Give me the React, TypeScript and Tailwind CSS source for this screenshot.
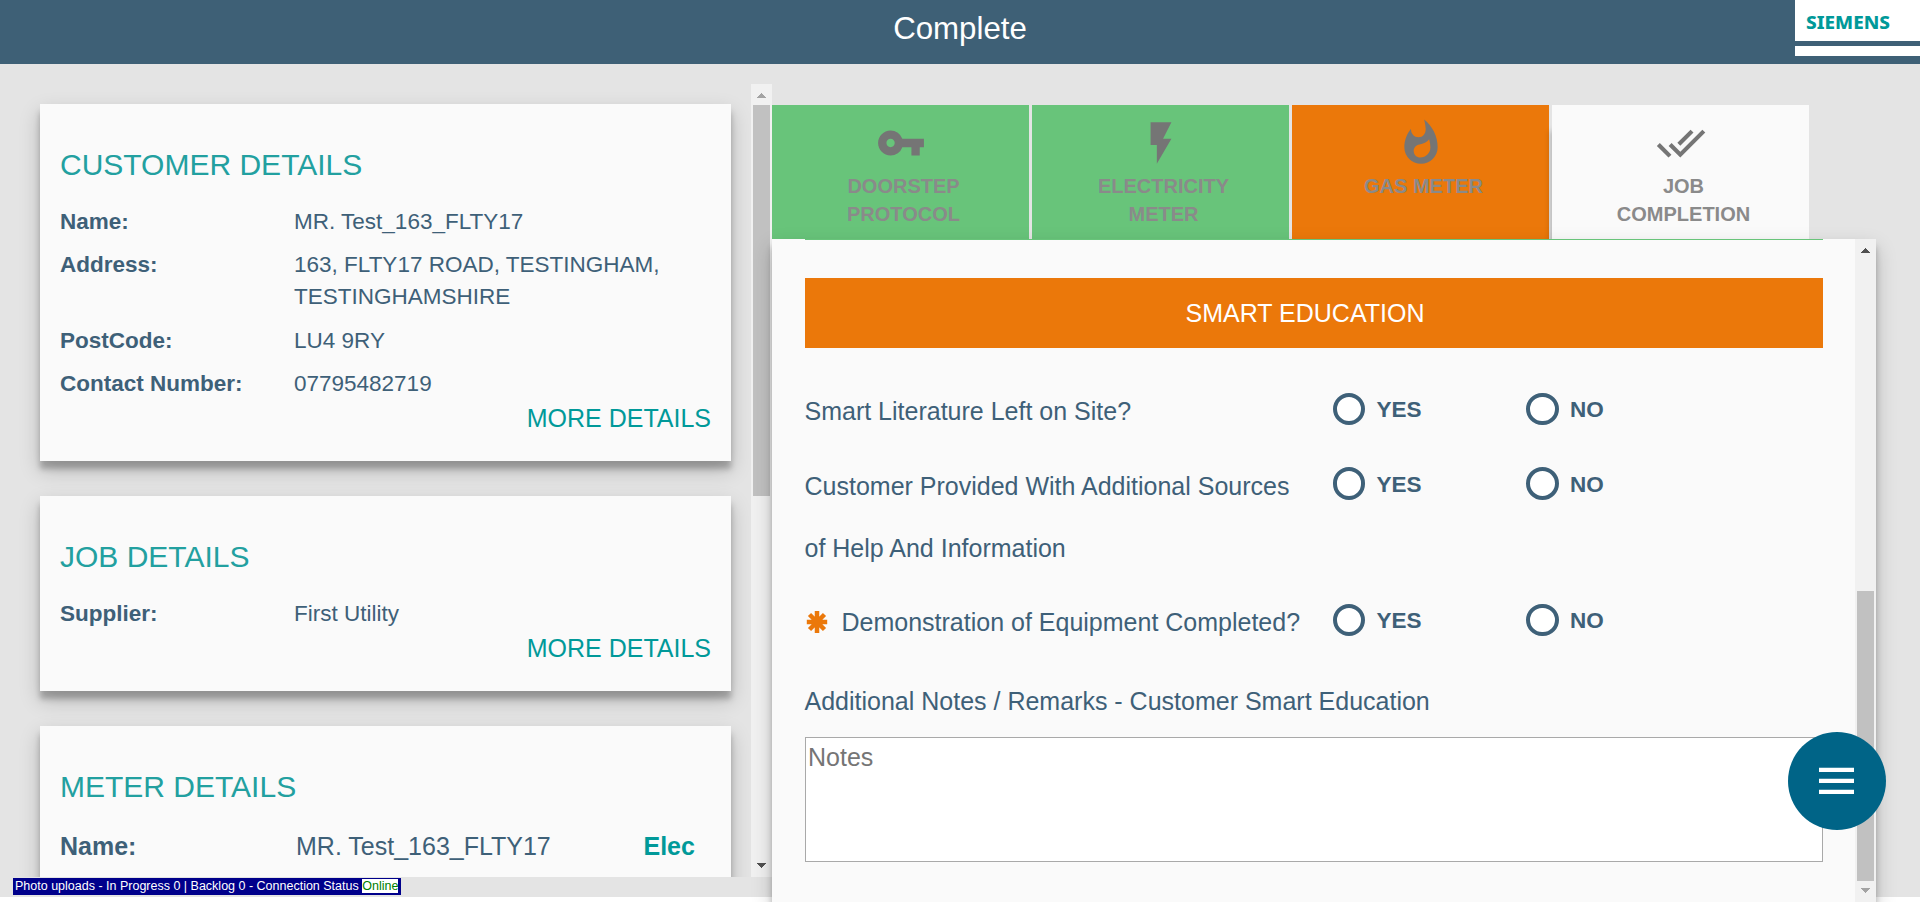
import type { ReactNode } from "react";
import { MdDoneAll, MdFlashOn, MdVpnKey, MdWhatshot } from "react-icons/md";

const cardShadow =
  "shadow-[0_8px_6px_0_rgba(0,0,0,0.24),0_9px_20px_0_rgba(0,0,0,0.2)]";

function Arrow({ up, className }: { up?: boolean; className: string }) {
  return (
    <svg width="9" height="5" viewBox="0 0 9 5" className={className} shapeRendering="crispEdges">
      <path d={up ? "M0 5L4.5 0L9 5Z" : "M0 0L4.5 5L9 0Z"} fill="currentColor" />
    </svg>
  );
}

function Card({ title, className, children }: { title: string; className: string; children: ReactNode }) {
  return (
    <section className={`shrink-0 bg-[#fafafa] px-5 pt-[39px] ${cardShadow} ${className}`}>
      <h2 className="mb-5 text-[30px] leading-[43px] text-[#22a0a0]">{title}</h2>
      {children}
    </section>
  );
}

function Field({ label, value }: { label: string; value: string }) {
  return (
    <div className="mb-[11.4px] flex text-[22.5px] leading-8 last-of-type:mb-0">
      <span className="w-[234px] shrink-0 font-bold">{label}</span>
      <span className="w-[390px]">{value}</span>
    </div>
  );
}

function MoreDetails() {
  return <a className="block text-right text-[25px] leading-9 text-[#009999]">MORE DETAILS</a>;
}

function Tab({ icon, label, className }: { icon: ReactNode; label: string; className: string }) {
  return (
    <div className={`flex h-[134px] w-[257px] flex-col items-center pt-[13px] ${className}`}>
      <span className="text-[50px] text-[#757575]">{icon}</span>
      <span className="mt-1 ml-[6px] w-[150px] text-center text-[20px] leading-[28.4px] font-bold text-[#8a8a8a]">
        {label}
      </span>
    </div>
  );
}

function Choice({ label }: { label: string }) {
  return (
    <label className="flex w-[193.5px]">
      <span className="mt-[12.5px] size-[32.5px] rounded-full border-4 border-[#3e6078] bg-white" />
      <span className="mt-[14px] ml-[11.5px] text-[22.5px] leading-8 font-bold">{label}</span>
    </label>
  );
}

function Question({ children, required }: { children: ReactNode; required?: boolean }) {
  return (
    <div className="flex">
      <div className="flex w-[528px] shrink-0 leading-[62px]">
        {required && (
          <svg width="22" height="22" viewBox="0 0 22 22" className="mt-5 mr-[14px] ml-[1px] shrink-0">
            <path
              d="M11 0V22M.8 11H21.2M3.5 3.5L18.5 18.5M18.5 3.5L3.5 18.5"
              stroke="#eb780a"
              strokeWidth="4.5"
              fill="none"
            />
          </svg>
        )}
        <span>{children}</span>
      </div>
      <Choice label="YES" />
      <Choice label="NO" />
    </div>
  );
}

export default function App() {
  return (
    <div className="relative h-[902px] w-[1920px] overflow-hidden bg-white font-['Liberation_Sans',Arial,sans-serif] text-[#3e6078]">
      <header className="grid h-16 grid-cols-[125px_1fr_125px] bg-[#3e6076]">
        <span />
        <h1 className="text-center text-[31.25px] leading-[58px] text-white">Complete</h1>
        <div className="flex h-14 flex-col bg-white">
          <svg width="125" height="41" viewBox="0 0 125 41">
            <text
              x="11"
              y="28.5"
              fontFamily="'Noto Sans', sans-serif"
              fontWeight="800"
              fontSize="18.5"
              textLength="84"
              lengthAdjust="spacingAndGlyphs"
              fill="#009999"
            >
              SIEMENS
            </text>
          </svg>
          <div className="h-[5px] bg-[#3e6076]" />
        </div>
      </header>

      <main className="flex h-[833px] bg-[#e4e4e4]">
        <div className="flex w-[772px] shrink-0 flex-col pt-5">
          <div className="flex h-[793px] overflow-hidden">
            <div className="flex w-[751px] flex-col gap-[35px] pt-5 pr-5 pl-10">
              <Card title="CUSTOMER DETAILS" className="h-[357px]">
                <Field label="Name:" value="MR. Test_163_FLTY17" />
                <Field label="Address:" value="163, FLTY17 ROAD, TESTINGHAM, TESTINGHAMSHIRE" />
                <Field label="PostCode:" value="LU4 9RY" />
                <Field label="Contact Number:" value="07795482719" />
                <MoreDetails />
              </Card>
              <Card title="JOB DETAILS" className="h-[195px]">
                <Field label="Supplier:" value="First Utility" />
                <MoreDetails />
              </Card>
              <Card title="METER DETAILS" className="h-[300px]">
                <div className="flex text-[25px] leading-9">
                  <span className="w-[236px] font-bold">Name:</span>
                  <span className="w-[347.5px]">MR. Test_163_FLTY17</span>
                  <span className="font-bold text-[#009999]">Elec</span>
                </div>
              </Card>
            </div>
            <div className="flex w-[21px] flex-col items-center bg-[#f1f1f1]">
              <Arrow up className="mt-[9px] shrink-0 text-[#a3a3a3]" />
              <div className="mt-[7px] h-[391px] w-[17px] bg-[#c1c1c1]" />
              <Arrow className="mt-auto mb-[9px] shrink-0 text-[#505050]" />
            </div>
          </div>
          <div className="mt-px ml-[13px] flex h-[17px] w-[388px] items-center bg-[#00008b] pb-[2px] pl-[2px] text-[12.5px] leading-[14px] whitespace-pre text-white">
            {"Photo uploads - In Progress 0 | Backlog 0 - Connection Status "}
            <span className="bg-white text-[#008000]">Online</span>
          </div>
        </div>

        <div className="flex h-[838px] w-[1104px] shrink-0 flex-col pt-[41px]">
          <div className="flex shrink-0 gap-[3px]">
            <Tab icon={<MdVpnKey />} label="DOORSTEP PROTOCOL" className="bg-[#68c47a]" />
            <Tab icon={<MdFlashOn />} label="ELECTRICITY METER" className="bg-[#68c47a]" />
            <Tab icon={<MdWhatshot />} label="GAS METER" className="bg-[#eb780a]" />
            <Tab
              icon={<MdDoneAll />}
              label="JOB COMPLETION"
              className="bg-[#fafafa] shadow-[-6px_22px_6px_-4px_rgba(0,0,0,0.2)]"
            />
          </div>
          <div className={`relative flex flex-1 bg-[#fafafa] ${cardShadow}`}>
            <div className="w-[1083px] pl-[33px]">
              <div className="w-[1018px] text-[25px]">
                <div className="h-px bg-[#68c47a]" />
                <h3 className="mt-[38px] mb-8 h-[70px] bg-[#eb780a] pr-[18px] text-center leading-[70px] text-white">
                  SMART EDUCATION
                </h3>
                <div className="-ml-[0.5px] flex flex-col gap-[12.5px]">
                  <Question>Smart Literature Left on Site?</Question>
                  <Question>
                    Customer Provided With Additional Sources
                    <br />
                    of Help And Information
                  </Question>
                  <Question required>Demonstration of Equipment Completed?</Question>
                </div>
                <div className="mt-[17px] mb-[5px] -ml-[0.5px] leading-[62px]">
                  Additional Notes / Remarks - Customer Smart Education
                </div>
                <textarea
                  placeholder="Notes"
                  className="block h-[125px] w-full resize-none border border-[#a9a9a9] bg-white px-[2px] pt-[3px] leading-[33px] placeholder:text-[#757575]"
                />
              </div>
            </div>
            <div className="flex w-[21px] flex-col items-center bg-[#f1f1f1]">
              <Arrow up className="mt-[9px] shrink-0 text-[#505050]" />
              <div className="mt-[338px] h-[290px] w-[17px] bg-[#c1c1c1]" />
              <Arrow className="mt-[7px] shrink-0 text-[#a3a3a3]" />
            </div>
          </div>
        </div>
      </main>

      <button className="absolute top-[732px] left-[1788.4px] flex size-[97.5px] items-center justify-center rounded-full bg-[#006487]">
        <svg width="35" height="28" viewBox="0 0 35 28" className="-ml-px">
          <path d="M0 .7H35V5H0ZM0 11.7H35V16H0ZM0 22.7H35V27H0Z" fill="#fff" />
        </svg>
      </button>
    </div>
  );
}
